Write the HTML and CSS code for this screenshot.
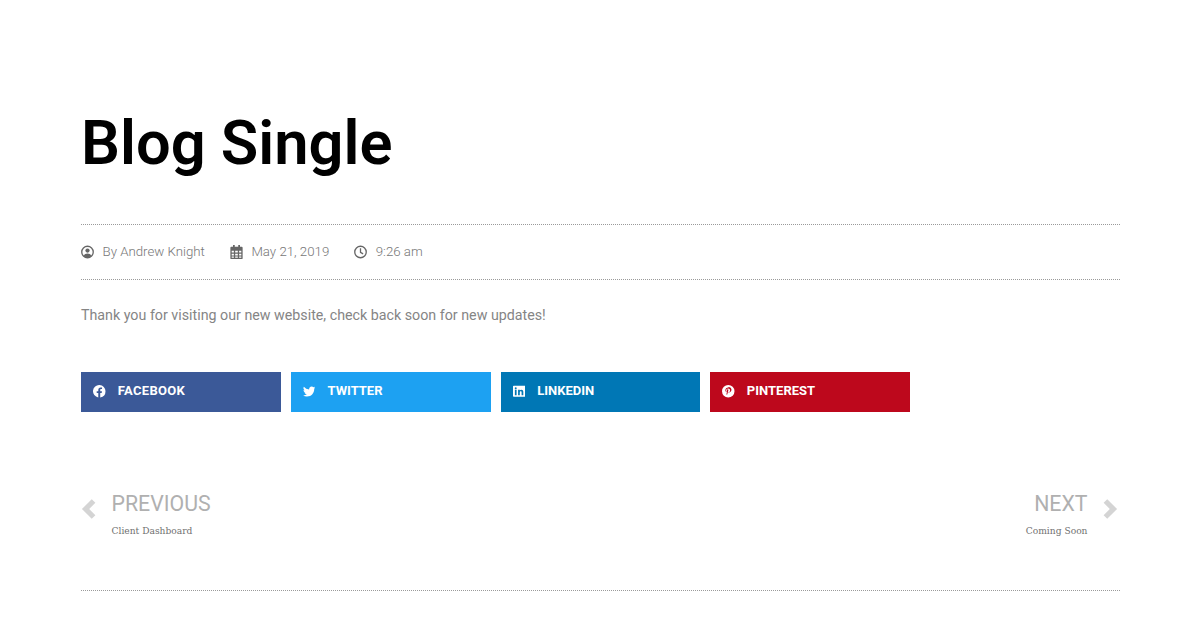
FILE: index.html
```html
<!DOCTYPE html>
<html lang="en">
<head>
<meta charset="utf-8">
<title>Blog Single</title>
<link rel="stylesheet" href="styles.css">
</head>
<body>
<main class="post">
  <h1 class="title">Blog Single</h1>
  <ul class="meta">
    <li class="meta-item">
      <svg class="meta-icon" viewBox="1 1 14 14"><circle cx="8" cy="8" r="6.200" fill="none" stroke="currentColor" stroke-width="1.400"/><circle cx="8" cy="6.500" r="2.300" fill="currentColor"/><path d="M3.800 12.400c.8-1.900 2.400-2.700 4.200-2.700s3.400.8 4.200 2.700L8 14.500z" fill="currentColor"/></svg>
      <span>By Andrew Knight</span>
    </li>
    <li class="meta-item">
      <svg class="meta-icon" viewBox="0 0 14 16"><path fill-rule="evenodd" d="M3 0h2v2h4V0h2v2h2a1 1 0 0 1 1 1v12a1 1 0 0 1-1 1H1a1 1 0 0 1-1-1V3a1 1 0 0 1 1-1h2zM1.500 6.500v2h2.500v-2zm4 0v2h3v-2zm4.500 0v2h2.500v-2zM1.500 10v2h2.500v-2zm4 0v2h3v-2zm4.500 0v2h2.500v-2zM1.500 13v1.500h2.500V13zm4 0v1.500h3V13zm4.500 0v1.500h2.500V13z" fill="currentColor"/></svg>
      <span>May 21, 2019</span>
    </li>
    <li class="meta-item">
      <svg class="meta-icon" viewBox="1 1 14 14"><circle cx="8" cy="8" r="6.200" fill="none" stroke="currentColor" stroke-width="1.400"/><path d="M8 4v4.300l2.800 1.700" fill="none" stroke="currentColor" stroke-width="1.400"/></svg>
      <span>9:26 am</span>
    </li>
  </ul>
  <p class="content">Thank you for visiting our new website, check back soon for new updates!</p>
  <div class="share">
    <a class="share-btn facebook" href="#">
      <svg class="share-icon" viewBox="0 0 16 16"><path fill="currentColor" d="M16 8a8 8 0 1 0-9.250 7.900v-5.590H4.720V8h2.030V6.240c0-2 1.190-3.110 3.020-3.110.870 0 1.790.160 1.790.160v1.960h-1.010c-.990 0-1.300.620-1.300 1.250V8h2.220l-.350 2.310H9.250v5.590A8 8 0 0 0 16 8z"/></svg>
      <span>FACEBOOK</span>
    </a>
    <a class="share-btn twitter" href="#">
      <svg class="share-icon" viewBox="0 0 16 16"><path fill="currentColor" d="M16 3.500c-.6.270-1.230.440-1.890.520.680-.410 1.200-1.050 1.440-1.820-.630.380-1.340.650-2.080.800A3.280 3.280 0 0 0 7.880 5.800 9.300 9.300 0 0 1 1.110 2.370a3.280 3.280 0 0 0 1.020 4.380c-.540-.020-1.040-.170-1.490-.410v.040c0 1.590 1.130 2.910 2.630 3.220-.480.130-.990.150-1.480.060a3.280 3.280 0 0 0 3.060 2.280A6.580 6.580 0 0 1 0 13.290 9.290 9.290 0 0 0 5.030 14.760c6.040 0 9.340-5 9.340-9.340l-.01-.430A6.670 6.670 0 0 0 16 3.500z"/></svg>
      <span>TWITTER</span>
    </a>
    <a class="share-btn linkedin" href="#">
      <svg class="share-icon" viewBox="0 0 16 16"><path fill="currentColor" fill-rule="evenodd" d="M1 1h14a1 1 0 0 1 1 1v12a1 1 0 0 1-1 1H1a1 1 0 0 1-1-1V2a1 1 0 0 1 1-1zm1.400 5.200V13h2.200V6.200zM3.500 3a1.250 1.250 0 1 0 0 2.500 1.250 1.250 0 0 0 0-2.500zm3 3.200V13h2.200V9.500c0-.950.400-1.550 1.200-1.550s1.100.600 1.100 1.500V13h2.200V9c0-2-1-3-2.500-3-1 0-1.700.500-2 1.100v-.9z"/></svg>
      <span>LINKEDIN</span>
    </a>
    <a class="share-btn pinterest" href="#">
      <svg class="share-icon" viewBox="0 0 16 16"><path fill="currentColor" fill-rule="evenodd" d="M8 0a8 8 0 1 1 0 16A8 8 0 0 1 8 0zm.200 3.300c-2.500 0-3.900 1.700-3.900 3.500 0 .850.450 1.900 1.170 2.230.110.050.170.030.190-.080l.160-.650c.020-.060 0-.120-.050-.170-.240-.290-.430-.820-.430-1.310 0-1.270.960-2.490 2.590-2.490 1.410 0 2.400.960 2.400 2.330 0 1.550-.780 2.620-1.800 2.620-.560 0-.980-.460-.850-1.030.160-.680.470-1.410.470-1.900 0-.440-.240-.800-.730-.800-.580 0-1.040.600-1.040 1.400 0 .510.170.850.170.850l-.680 2.900c-.120.500-.05 1.300 0 1.800.650.250.900-.700 1.400-2.400l.300-1.100c.200.400.800.700 1.400.700 1.850 0 3.150-1.700 3.150-3.800 0-2-1.650-3.500-3.720-3.500z"/></svg>
      <span>PINTEREST</span>
    </a>
  </div>
  <nav class="pager">
    <a class="pager-link" href="#">
      <svg class="pager-arrow" viewBox="0 0 14 20"><path d="M11 3L4 10l7 7" fill="none" stroke="currentColor" stroke-width="4.500"/></svg>
      <span class="pager-text">
        <span class="pager-label">PREVIOUS</span>
        <span class="pager-title">Client Dashboard</span>
      </span>
    </a>
    <a class="pager-link pager-next" href="#">
      <span class="pager-text">
        <span class="pager-label">NEXT</span>
        <span class="pager-title">Coming Soon</span>
      </span>
      <svg class="pager-arrow" viewBox="0 0 14 20"><path d="M3 3l7 7-7 7" fill="none" stroke="currentColor" stroke-width="4.500"/></svg>
    </a>
  </nav>
</main>
</body>
</html>
```

FILE: styles.css
```css
* { box-sizing: border-box; }
html, body { margin: 0; padding: 0; background: #fff; }
body { font-family: Roboto, sans-serif; color: #7a7a7a; overflow: hidden; }
a { text-decoration: none; }
.post { width: 1039px; margin-left: 81px; padding-top: 107px; }
.title { margin: 0; font-size: 61.400px; font-weight: 600; line-height: 72px; color: #000; height: 117px; }
.meta {
  list-style: none; margin: 0; padding: 0 0 1px; display: flex; gap: 25px; align-items: center;
  height: 56px; border-top: 1px dotted #9a9a9a; border-bottom: 1px dotted #9a9a9a;
  font-size: 13.250px; font-weight: 300; color: #777;
}
.meta-item { display: flex; align-items: center; gap: 8.500px; }
.meta-icon { width: 13px; height: 14px; color: #666; }
.content { margin: 0; padding-top: 25px; font-size: 14.260px; line-height: 20px; color: #858585; height: 92px; }
.share { display: flex; gap: 10px; margin-left: .3px; }
.share-btn {
  width: 199.700px; height: 40px; display: flex; align-items: center; gap: 12px; padding-left: 12px; padding-bottom: 3px;
  color: #fff; font-size: 13px; font-weight: 700;
}
.share-icon { width: 12.500px; height: 12.500px; margin-top: 2px; }
.facebook { background: #3b5998; letter-spacing: .3px; }
.twitter { background: #1da1f2; }
.linkedin { background: #0077b5; }
.pinterest { background: #bd081c; }
.pager { display: flex; justify-content: space-between; margin-top: 79px; height: 100px; border-bottom: 1px dotted #9a9a9a; }
.pager-link { display: flex; align-items: flex-start; gap: 14.500px; height: 50px; color: #aaa; }
.pager-arrow { width: 16px; height: 24px; margin-top: 6px; color: #d4d4d4; }
.pager-text { display: flex; flex-direction: column; }
.pager-next { text-align: right; padding-right: 2px; }
.pager-label { font-size: 21.300px; line-height: 26px; color: #b0b0b0; }
.pager-title { font-family: "DejaVu Serif", serif; font-size: 9.150px; line-height: 14px; margin-top: 7px; color: #707070; }
```
